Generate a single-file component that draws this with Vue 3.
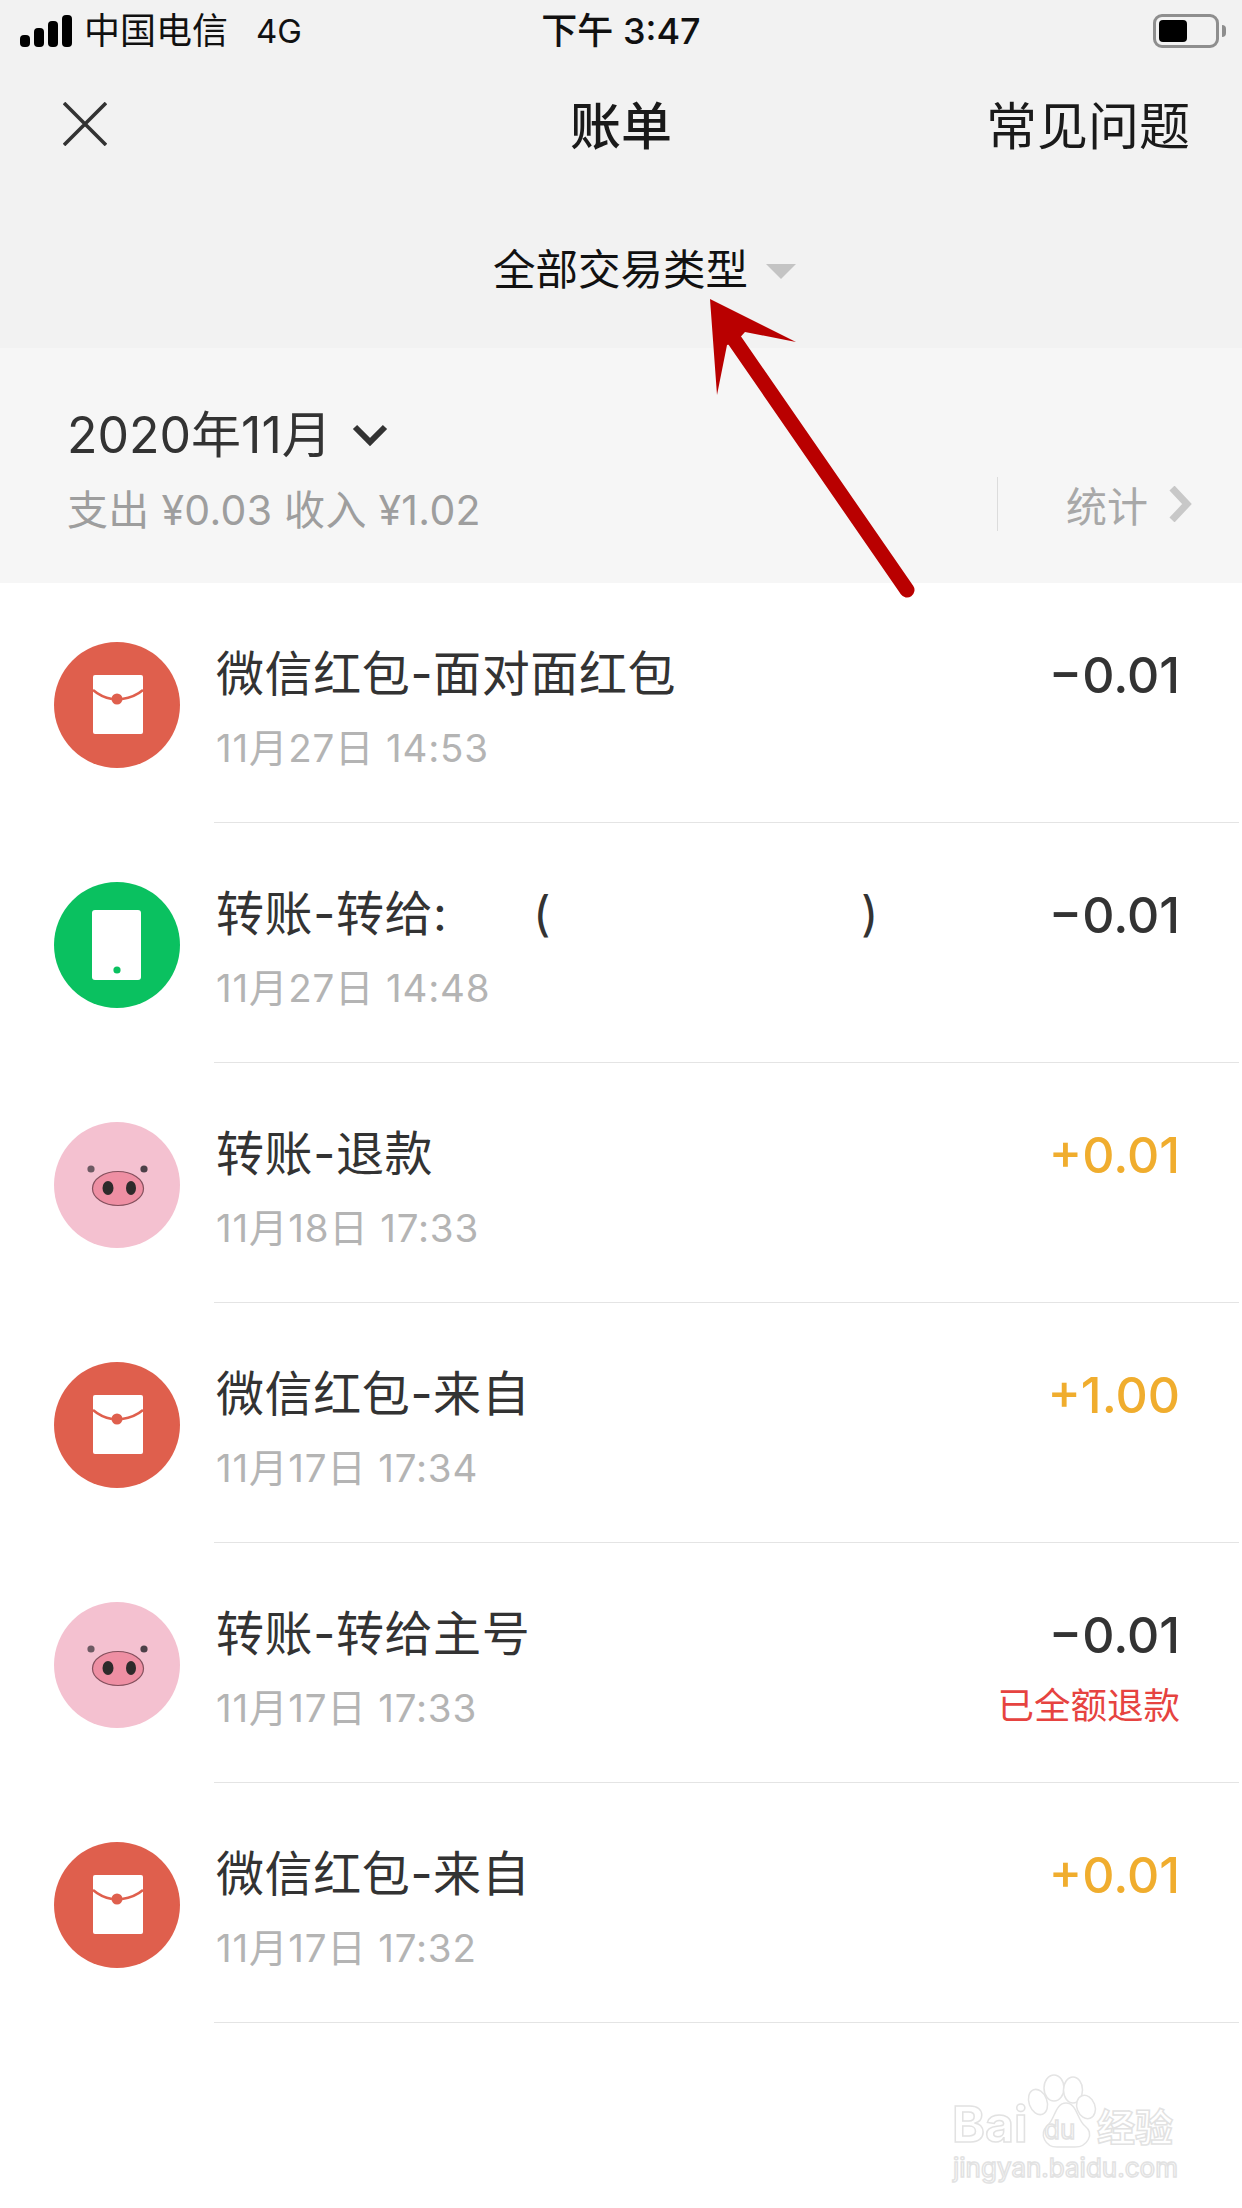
<template>
  <div class="page">
    <header class="top">
      <div class="status">
        <div class="status-left">
          <span class="signal"><i v-for="h in bars" :key="h" :style="{ height: h + 'px' }"></i></span>
          <span class="carrier">中国电信</span>
          <span class="net">4G</span>
        </div>
        <div class="clock">下午 3:47</div>
        <div class="battery"><span class="battery-body"><i></i></span><span class="battery-cap"></span></div>
      </div>
      <div class="nav">
        <svg class="close" width="44" height="44" viewBox="0 0 44 44">
          <path d="M1 1 L43 43 M43 1 L1 43" stroke="#333" stroke-width="3.6" fill="none" />
        </svg>
        <div class="nav-title">账单</div>
        <div class="nav-link">常见问题</div>
      </div>
      <div class="filter">
        <span>全部交易类型</span>
        <i class="caret"></i>
      </div>
    </header>

    <section class="month">
      <div class="month-left">
        <div class="month-title">
          <span>2020年11月</span>
          <svg width="36" height="24" viewBox="0 0 36 24">
            <path d="M3 4 L18 19 L33 4" stroke="#333" stroke-width="6" fill="none" />
          </svg>
        </div>
        <div class="month-sum">支出 ¥0.03 收入 ¥1.02</div>
      </div>
      <div class="stats">
        <span>统计</span>
        <svg width="24" height="36" viewBox="0 0 24 36">
          <path d="M4 2 L19 18 L4 34" stroke="#c8c8c8" stroke-width="7" fill="none" />
        </svg>
      </div>
    </section>

    <ul class="list">
      <li v-for="(row, i) in rows" :key="i" class="row">
        <div class="avatar" :class="row.type">
          <svg v-if="row.type === 'packet'" width="126" height="126" viewBox="0 0 126 126">
            <rect x="39" y="33" width="50" height="59" rx="2" fill="#fff" />
            <path d="M39 48 Q47 55 58 57 M68 57 Q81 55 89 48" stroke="#df5f4d" stroke-width="2.500" fill="none" />
            <circle cx="63" cy="57" r="5.500" fill="#df5f4d" />
          </svg>
          <svg v-else-if="row.type === 'phone'" width="126" height="126" viewBox="0 0 126 126">
            <rect x="38" y="28" width="49" height="70" rx="3" fill="#fff" />
            <circle cx="63" cy="88" r="3.600" fill="#0ac160" />
          </svg>
          <svg v-else width="126" height="126" viewBox="0 0 126 126">
            <circle cx="37" cy="47" r="3.600" fill="#6d5a63" />
            <circle cx="90" cy="47" r="3.600" fill="#4c4048" />
            <ellipse cx="64" cy="66.500" rx="25.500" ry="17" fill="#ee8fa3" stroke="#84505d" stroke-width="1.200" />
            <ellipse cx="54" cy="66" rx="5.500" ry="7" fill="#2e2a2a" />
            <ellipse cx="77" cy="66" rx="5" ry="7" fill="#2e2a2a" />
          </svg>
        </div>
        <div class="row-body">
          <div class="row-main">
            <div class="row-title">
              <span>{{ row.title }}</span>
              <template v-if="row.masked">
                <span class="paren-open">(</span>
                <span class="paren-close">)</span>
              </template>
            </div>
            <div class="row-time">{{ row.time }}</div>
          </div>
          <div class="row-side">
            <div class="amount" :class="{ income: row.amount[0] === '+' }">{{ row.amount }}</div>
            <div v-if="row.note" class="note">{{ row.note }}</div>
          </div>
        </div>
      </li>
    </ul>

    <svg class="arrow" width="1242" height="640" viewBox="0 0 1242 640">
      <path d="M710 299 L796 342 L745 332 L735 343 L727 345 L717 395 Z" fill="#b90000" />
      <path d="M733 338 L907 590" stroke="#b90000" stroke-width="15" stroke-linecap="round" fill="none" />
    </svg>

    <div class="mark">
      <svg class="paw" width="80" height="85" viewBox="0 0 80 85">
        <g fill="#fff" stroke="#e4e4e4" stroke-width="1.500">
          <ellipse cx="13" cy="32" rx="9" ry="13" transform="rotate(-20 13 32)" />
          <ellipse cx="29" cy="18" rx="10" ry="13" />
          <ellipse cx="48" cy="20" rx="9.500" ry="13" />
          <ellipse cx="61" cy="37" rx="9" ry="12" transform="rotate(-20 61 37)" />
          <path d="M41 33 C30 33 30 50 22 56 C14 64 20 77 32 77 H50 C62 77 70 64 60 56 C52 50 52 33 41 33 Z" />
        </g>
      </svg>
      <span class="mark-bai">Bai</span>
      <span class="mark-du">du</span>
      <span class="mark-jy">经验</span>
      <span class="mark-url">jingyan.baidu.com</span>
    </div>
  </div>
</template>

<script setup>
const bars = [12, 19, 26, 32];

const rows = [
  { type: "packet", title: "微信红包-面对面红包", time: "11月27日 14:53", amount: "−0.01" },
  { type: "phone", title: "转账-转给:", masked: true, time: "11月27日 14:48", amount: "−0.01" },
  { type: "pig", title: "转账-退款", time: "11月18日 17:33", amount: "+0.01" },
  { type: "packet", title: "微信红包-来自", time: "11月17日 17:34", amount: "+1.00" },
  { type: "pig", title: "转账-转给主号", time: "11月17日 17:33", amount: "−0.01", note: "已全额退款" },
  { type: "packet", title: "微信红包-来自", time: "11月17日 17:32", amount: "+0.01" },
];
</script>

<style>
body {
  background: #fff;
}
</style>

<style scoped>
.page {
  position: relative;
  width: 1242px;
  height: 2208px;
  overflow: hidden;
  background: #fff;
  color: #333;
  font-family: Inter, "Noto Sans CJK SC", sans-serif;
}

.top {
  height: 348px;
  background: #f2f2f2;
}

.status {
  position: relative;
  height: 60px;
  display: flex;
  align-items: center;
  justify-content: space-between;
  padding: 2px 16px 0 20px;
  box-sizing: border-box;
  color: #111;
}

.status-left {
  display: flex;
  align-items: center;
}

.signal {
  display: flex;
  align-items: flex-end;
  gap: 4px;
  height: 32px;
  margin-right: 12px;
}

.signal i {
  width: 10px;
  border-radius: 4px;
  background: #000;
}

.carrier {
  font-size: 36px;
  line-height: 44px;
}

.net {
  margin-left: 28px;
  font-size: 33px;
  line-height: 44px;
}

.clock {
  position: absolute;
  left: 0;
  right: 0;
  text-align: center;
  font-size: 36px;
  font-weight: 500;
  line-height: 44px;
}

.battery {
  display: flex;
  align-items: center;
  gap: 3px;
}

.battery-body {
  width: 66px;
  height: 34px;
  box-sizing: border-box;
  padding: 3px;
  border: 3px solid #8e8e8e;
  border-radius: 9px;
}

.battery-body i {
  display: block;
  width: 28px;
  height: 22px;
  border-radius: 4px;
  background: #000;
}

.battery-cap {
  width: 4px;
  height: 12px;
  border-radius: 0 6px 6px 0;
  background: #8e8e8e;
}

.nav {
  position: relative;
  height: 126px;
  display: flex;
  align-items: center;
  justify-content: space-between;
  padding: 0 52px 0 63px;
}

.close {
  margin-top: 2px;
}

.nav-title {
  position: absolute;
  left: 0;
  right: 0;
  text-align: center;
  font-size: 51px;
  font-weight: 500;
  color: #1a1a1a;
}

.nav-link {
  font-size: 51px;
  color: #1a1a1a;
}

.filter {
  display: flex;
  align-items: center;
  justify-content: center;
  gap: 18px;
  padding: 60px 0 0 47px;
  font-size: 42.500px;
  line-height: 48px;
  color: #111;
}

.caret {
  width: 0;
  height: 0;
  margin-top: 3px;
  border-left: 15px solid transparent;
  border-right: 15px solid transparent;
  border-top: 15px solid #c4c4c4;
}

.month {
  height: 235px;
  box-sizing: border-box;
  background: #f6f6f6;
  display: flex;
  align-items: flex-end;
  justify-content: space-between;
  padding: 0 50px 48px 67px;
}

.month-title {
  display: flex;
  align-items: center;
  gap: 20px;
  font-size: 50px;
  line-height: 60px;
  color: #333;
}

.month-sum {
  margin-top: 20px;
  font-size: 41px;
  line-height: 50px;
  letter-spacing: 0.300px;
  color: #9e9e9e;
}

.stats {
  display: flex;
  align-items: center;
  gap: 20px;
  height: 54px;
  margin-bottom: 4px;
  padding-left: 68px;
  border-left: 1px solid #dcdcdc;
  font-size: 41px;
  color: #a8a8a8;
}

.list {
  margin: 0;
  padding: 0;
  list-style: none;
}

.row {
  display: flex;
  align-items: center;
  height: 240px;
  padding-left: 54px;
}

.avatar {
  flex: none;
  width: 126px;
  height: 126px;
  margin-top: 4px;
  border-radius: 50%;
}

.avatar svg {
  display: block;
}

.packet {
  background: #df5f4d;
}

.phone {
  background: #0ac160;
}

.pig {
  background: #f4c1d0;
}

.row-body {
  flex: 1;
  height: 240px;
  box-sizing: border-box;
  display: flex;
  justify-content: space-between;
  margin: 0 3px 0 34px;
  padding: 63px 59px 0 2px;
  border-bottom: 1px solid #e4e4e4;
}

.row-title {
  position: relative;
  font-size: 48px;
  line-height: 56px;
  letter-spacing: 0.600px;
  color: #333;
}

.paren-open,
.paren-close {
  position: absolute;
  top: 0;
}

.paren-open {
  left: 317px;
}

.paren-close {
  left: 645px;
}

.row-time {
  margin-top: 21px;
  font-size: 38.500px;
  line-height: 50px;
  letter-spacing: 0.800px;
  color: #b4b4b4;
}

.row-side {
  text-align: right;
}

.amount {
  padding-top: 1px;
  font-size: 50px;
  font-weight: 500;
  line-height: 56px;
  color: #333;
}

.income {
  color: #f0ad2e;
}

.note {
  margin-top: 18px;
  font-size: 36.500px;
  line-height: 50px;
  color: #e64340;
}

.arrow {
  position: absolute;
  left: 0;
  top: 0;
}

.mark {
  position: absolute;
  left: 950px;
  top: 2070px;
  width: 240px;
  height: 120px;
  color: #fff;
  -webkit-text-stroke: 1.500px #e2e2e2;
  font-weight: 700;
}

.paw {
  position: absolute;
  left: 75px;
  top: 0;
}

.mark-bai {
  position: absolute;
  left: 2px;
  top: 29px;
  font-size: 50px;
  line-height: 50px;
}

.mark-du {
  position: absolute;
  left: 94px;
  top: 47px;
  font-size: 26px;
  line-height: 26px;
  font-weight: 400;
}

.mark-jy {
  position: absolute;
  left: 147px;
  top: 37px;
  font-size: 38px;
  line-height: 40px;
}

.mark-url {
  position: absolute;
  left: 3px;
  top: 83px;
  font-size: 26px;
  line-height: 30px;
  font-weight: 400;
}
</style>
